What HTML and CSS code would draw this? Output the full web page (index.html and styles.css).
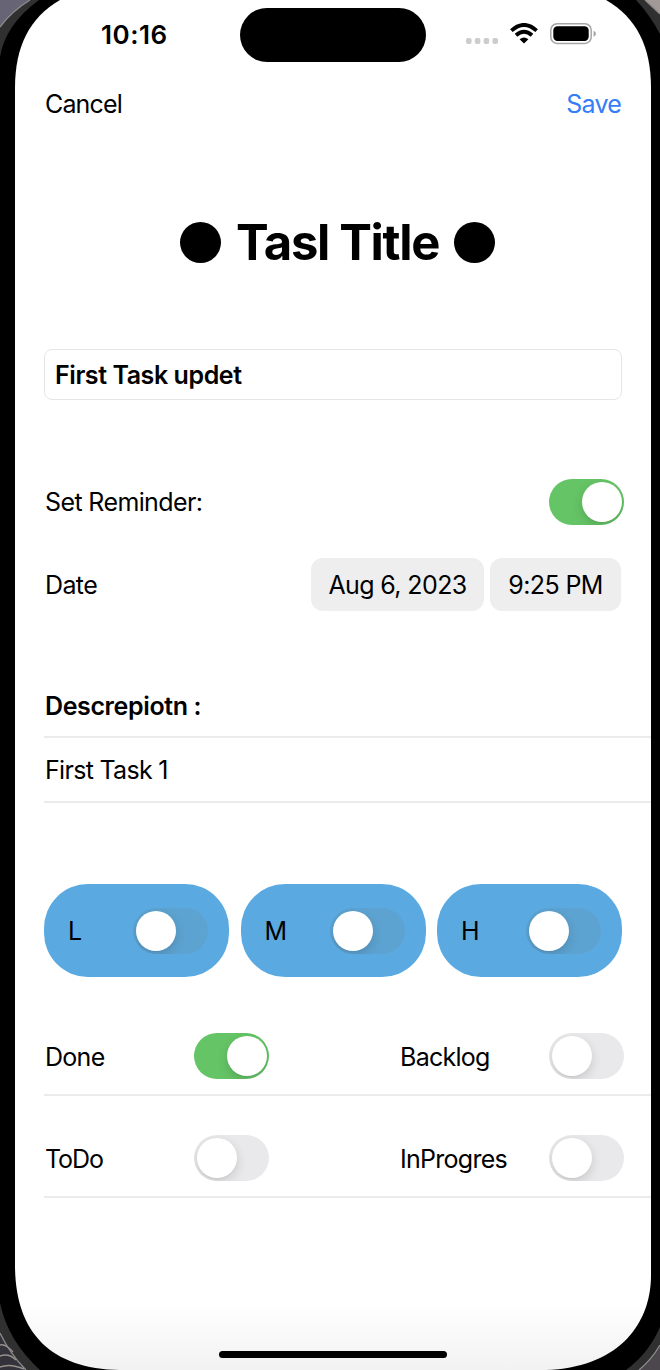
FILE: index.html
```html
<!DOCTYPE html>
<html lang="en">
<head>
<meta charset="utf-8">
<title>Task</title>
<link rel="stylesheet" href="styles.css">
</head>
<body>
<div class="device">
  <svg class="bezel" viewBox="0 0 660 1370" aria-hidden="true">
    <defs>
      <linearGradient id="fade" x1="0" y1="0" x2="0" y2="1">
        <stop offset=".95" stop-color="#fff"/><stop offset="1" stop-color="#f2f2f2"/>
      </linearGradient>
    </defs>
    <path fill="#000" d="M0 0H660V1370H0Z"/>
    <path fill="#303030" d="M0 0H39Q5 25 0 57ZM636 0H660V34Q650 15 636 0ZM0 1303Q8 1341 40 1370H0ZM660 1327Q649 1353 626 1370H660Z"/>
    <path fill="#666475" d="M0 0H30Q12 11 0 27Z"/>
    <path fill="#a29a96" d="M645 0H660V14Z"/>
    <path fill="#34323a" d="M0 1333Q10 1354 26 1370H0Z"/>
    <path fill="#4b474c" d="M660 1345Q652 1359 639 1370H660Z"/>
    <path fill="none" stroke="#98928c" stroke-width="1.5" d="M0 1345Q5 1343 13 1352M0 1356Q9 1353 16 1360M0 1367Q10 1363 24 1369"/>
    <path fill="none" stroke="#8b8b8b" stroke-width="1.3" d="M30 0Q12 11 0 27M645 0L660 14M0 1333Q10 1354 26 1370M660 1345Q652 1359 639 1370"/>
    <path fill="url(#fade)" d="M60 0C29 18 15 47 15 88V1265C15 1330 48 1369 120 1370H546C614 1368 651 1328 651 1275V88C651 47 637 18 606 0Z"/>
  </svg>
  <main class="screen">
    <header class="status">
      <span class="time">10:16</span>
      <span class="island"></span>
      <span class="indicators">
        <svg class="cell" viewBox="0 0 32 6"><g fill="#ccc"><rect width="5.6" height="6" rx="2"/><rect x="8.8" width="5.6" height="6" rx="2"/><rect x="17.6" width="5.6" height="6" rx="2"/><rect x="26.4" width="5.6" height="6" rx="2"/></g></svg>
        <svg class="wifi" viewBox="0 0 28 21"><g fill="none" stroke="#000" stroke-width="3.8"><path d="M1.4 7.6Q14-3.8 26.6 7.6"/><path d="M6 12.2Q14 5.2 22 12.2"/></g><path d="M9.6 16.2Q14 12.6 18.4 16.2L14 20.6Z"/></svg>
        <svg class="battery" viewBox="0 0 47 22"><rect x=".8" y=".8" width="40.4" height="19.6" rx="6.3" fill="none" stroke="#a6a6a6" stroke-width="1.5"/><rect x="3.3" y="3.2" width="35.4" height="14.8" rx="4.2"/><path fill="#a6a6a6" d="M43.5 7.7Q46 8.6 46 10.7T43.5 13.7Z"/></svg>
      </span>
    </header>
    <nav class="nav"><span class="cancel">Cancel</span><span class="save">Save</span></nav>
    <h1 class="title"><i class="dot"></i><span class="heading">Tasl Title</span><i class="dot"></i></h1>
    <div class="field">First Task updet</div>
    <section class="reminder">
      <div class="line"><span>Set Reminder:</span><span class="switch on"></span></div>
      <div class="line"><span>Date</span><div class="chips"><span class="chip chip-date">Aug 6, 2023</span><span class="chip chip-time">9:25 PM</span></div></div>
    </section>
    <section class="description">
      <div class="cell-row desc-head">Descrepiotn :</div>
      <div class="cell-row desc-body">First Task 1</div>
    </section>
    <section class="priorities">
      <div class="pill"><span>L</span><span class="switch"></span></div>
      <div class="pill"><span>M</span><span class="switch"></span></div>
      <div class="pill"><span>H</span><span class="switch"></span></div>
    </section>
    <section class="states">
      <div class="state-row"><span class="label">Done</span><span class="switch on"></span><span class="label">Backlog</span><span class="switch"></span></div>
      <div class="state-row"><span class="label tight">ToDo</span><span class="switch"></span><span class="label">InProgres</span><span class="switch"></span></div>
    </section>
    <div class="home"></div>
  </main>
</div>
</body>
</html>
```
FILE: styles.css
```css
* { box-sizing: border-box; }
body { margin: 0; background: #000; color: #000; font: 25px/30px Inter, "Liberation Sans", sans-serif; letter-spacing: -.62px; white-space: nowrap; }
.device { position: relative; width: 660px; height: 1370px; overflow: hidden; }
.bezel { position: absolute; inset: 0; width: 660px; height: 1370px; }
.screen { position: relative; display: flex; flex-direction: column; width: 636px; height: 1370px; margin-left: 15px; padding-left: 29px; }
.status { display: grid; grid-template-columns: 225px 186px 225px; height: 70px; margin-left: -29px; padding-top: 8px; }
.time { justify-self: start; margin: 12px 0 0 86px; font-size: 26px; font-weight: 600; letter-spacing: .5px; }
.island { height: 54px; border-radius: 27px; background: #000; }
.indicators { display: flex; height: 54px; padding-left: 40px; }
.cell { width: 32px; height: 6px; margin-top: 30px; }
.wifi { width: 28px; height: 21px; margin: 15px 0 0 12px; }
.battery { width: 47px; height: 22px; margin: 15px 0 0 11.5px; }
.nav, .line { display: flex; align-items: center; justify-content: space-between; margin-right: 30px; padding-left: 1px; }
.nav { height: 68px; }
.cancel { letter-spacing: -.85px; }
.save { color: #347df6; letter-spacing: -.8px; }
.title { display: flex; align-items: center; gap: 15px; height: 211px; margin: 0; padding: 0 0 2px 136px; font-size: 49px; line-height: 58px; font-weight: 700; letter-spacing: -1.34px; }
.heading { width: 203px; }
.dot { flex: none; width: 41px; height: 41px; border-radius: 50%; background: #000; }
.field { display: flex; align-items: center; width: 578px; height: 51px; padding-left: 10px; border: 1px solid #e6e6e6; border-radius: 8px; font-weight: 600; letter-spacing: -.43px; }
.reminder { margin-top: 60px; }
.line { height: 83px; }
.line .switch { margin-right: -3px; }
.chips { display: flex; gap: 6px; }
.chip { display: flex; align-items: center; justify-content: center; height: 53px; border-radius: 12px; background: #eee; }
.chip-date { width: 173px; }
.chip-time { width: 131px; }
.switch { position: relative; flex: none; width: 75px; height: 46px; border-radius: 23px; background: #e9e9eb; overflow: hidden; }
.switch::after { content: ""; position: absolute; left: 3px; top: 3px; width: 40px; height: 40px; border-radius: 50%; background: #fff; box-shadow: 0 4px 11px rgba(0, 0, 0, .14), 0 1px 1px rgba(0, 0, 0, .04); }
.switch.on { background: #65c466; }
.switch.on::after { left: 32.5px; }
.description { margin-top: 50px; }
.cell-row { display: flex; align-items: center; padding-left: 1px; border-bottom: 2px solid #ebebeb; }
.desc-head { height: 62px; font-weight: 600; letter-spacing: -.38px; }
.desc-body { height: 65px; letter-spacing: -.69px; }
.priorities { display: grid; grid-template-columns: repeat(3, 185px); gap: 11.5px; margin-top: 81px; }
.pill { display: flex; align-items: center; justify-content: space-between; height: 93px; padding: 0 21px 0 24px; border-radius: 44px; background: #5aaae1; }
.pill .switch { background: #5da3d1; }
.states { margin-top: 41px; }
.state-row { display: grid; grid-template-columns: 149px 206px 149px 75px; align-items: center; height: 78px; padding-left: 1px; border-bottom: 2px solid #ebebeb; }
.state-row + .state-row { margin-top: 24px; }
.label { padding-top: 1px; letter-spacing: -.72px; }
.tight { letter-spacing: -1.1px; }
.home { width: 228px; height: 7px; margin: auto 0 12px 175px; border-radius: 4px; background: #000; }
```
